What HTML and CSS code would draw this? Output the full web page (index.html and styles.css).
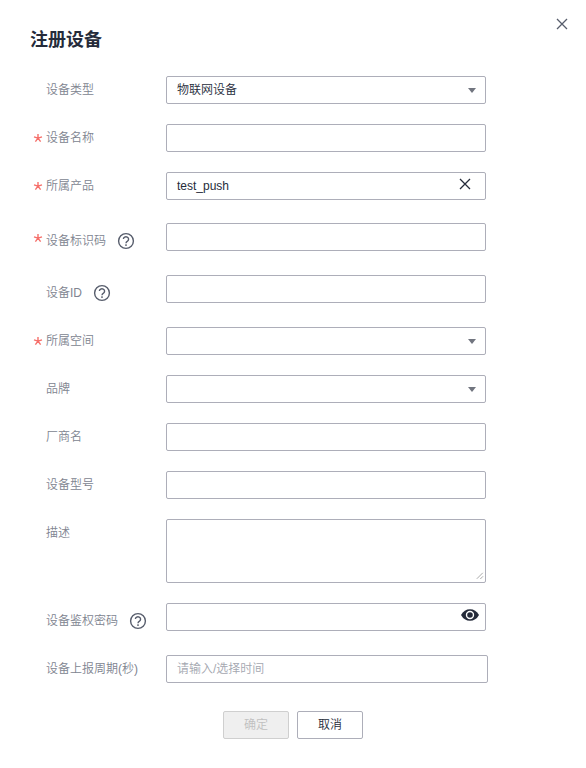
FILE: index.html
```html
<!DOCTYPE html>
<html lang="zh-CN">
<head>
<meta charset="utf-8">
<title>注册设备</title>
<link rel="stylesheet" href="styles.css">
</head>
<body>
<svg class="defs" aria-hidden="true">
  <symbol id="cross" viewBox="0 0 12 12"><path d="M1 1 11 11M11 1 1 11"/></symbol>
  <symbol id="help" viewBox="0 0 18 18"><circle cx="9" cy="9" r="7.4"/><path d="M6.400 7.100a2.600 2.400 0 1 1 4.100 2Q9 10 9 11.200"/><path d="M9 12.300v1.600"/></symbol>
  <symbol id="star" viewBox="0 0 10 10"><path d="M5 5.2V1M5 5.2 1 3.9M5 5.2 9 3.9M5 5.2 2.4 8.7M5 5.2 7.6 8.7"/></symbol>
</svg>
<main class="dialog">
  <button class="close" aria-label="关闭"><svg class="cross"><use href="#cross"/></svg></button>
  <h1 class="title">注册设备</h1>
  <form class="form">
    <div class="row">
      <label class="label"><span class="mark"></span>设备类型</label>
      <div class="control"><span>物联网设备</span><span class="caret"></span></div>
    </div>
    <div class="row">
      <label class="label"><span class="mark"><svg class="star"><use href="#star"/></svg></span>设备名称</label>
      <div class="control"></div>
    </div>
    <div class="row row-product">
      <label class="label"><span class="mark"><svg class="star"><use href="#star"/></svg></span>所属产品</label>
      <div class="control"><span>test_push</span><svg class="cross clear"><use href="#cross"/></svg></div>
    </div>
    <div class="row row-help">
      <label class="label"><span class="mark mark-high"><svg class="star"><use href="#star"/></svg></span>设备标识码<svg class="help"><use href="#help"/></svg></label>
      <div class="control"></div>
    </div>
    <div class="row row-help">
      <label class="label"><span class="mark"></span>设备ID<svg class="help"><use href="#help"/></svg></label>
      <div class="control"></div>
    </div>
    <div class="row">
      <label class="label"><span class="mark"><svg class="star"><use href="#star"/></svg></span>所属空间</label>
      <div class="control"><span class="caret"></span></div>
    </div>
    <div class="row">
      <label class="label"><span class="mark"></span>品牌</label>
      <div class="control"><span class="caret"></span></div>
    </div>
    <div class="row">
      <label class="label"><span class="mark"></span>厂商名</label>
      <div class="control"></div>
    </div>
    <div class="row">
      <label class="label"><span class="mark"></span>设备型号</label>
      <div class="control"></div>
    </div>
    <div class="row">
      <label class="label"><span class="mark"></span>描述</label>
      <div class="control control-area"><svg class="grip" viewBox="0 0 8 8"><path d="M.8 6.8 6.8.8M4.3 7 7 4.3"/></svg></div>
    </div>
    <div class="row row-help">
      <label class="label"><span class="mark"></span>设备鉴权密码<svg class="help"><use href="#help"/></svg></label>
      <div class="control"><svg class="eye" viewBox="0 0 18 12"><path class="lid" d="M0 6Q3.2.2 9 .2T18 6Q14.800 11.800 9 11.800T0 6Z"/><circle class="iris" cx="9" cy="6" r="3.500"/></svg></div>
    </div>
    <div class="row">
      <label class="label"><span class="mark"></span>设备上报周期(秒)</label>
      <div class="control control-wide"><span class="placeholder">请输入/选择时间</span></div>
    </div>
    <div class="actions">
      <button class="button" type="button" disabled>确定</button>
      <button class="button" type="button">取消</button>
    </div>
  </form>
</main>
</body>
</html>
```
FILE: styles.css
```css
* { box-sizing: border-box; }
body {
  margin: 0;
  background: #fff;
  color: #252b3a;
  font: 350 12px/18px "Liberation Sans", "Noto Sans CJK SC", sans-serif;
}
.defs { position: absolute; width: 0; height: 0; }
.dialog { position: relative; height: 768px; padding: 26px 30px 0; }
.title { margin: 0 0 22px; font-size: 18px; line-height: 28px; font-weight: 700; }
.close {
  position: absolute; top: 18px; right: 18px;
  display: flex; padding: 0; border: 0; background: none; color: #575d6c;
}
.cross { width: 12px; height: 12px; fill: none; stroke: currentColor; stroke-width: 1.3; }
.form { display: flex; flex-direction: column; gap: 20px; }
.row { display: grid; grid-template-columns: 136px 322px; align-items: start; min-height: 28px; }
.row-product { min-height: 31px; }
.row-help { min-height: 32px; }
.label { display: flex; align-items: center; height: 28px; color: #808490; }
.row-help .label { height: 36px; margin-bottom: -4px; }
.mark { display: flex; width: 16px; padding: 0 0 1px 3px; }
.mark-high { padding: 0 0 7px 3px; }
.star { width: 10px; height: 10px; fill: none; stroke: #f66f6a; stroke-width: 1.4; }
.help { width: 18px; height: 18px; margin-left: 11px; fill: none; stroke: #575d6c; stroke-width: 1.4; }
.control {
  display: flex; align-items: center; justify-content: space-between;
  width: 320px; height: 28px; padding: 0 9px 0 10px;
  border: 1px solid #adaeb9; border-radius: 2px; background: #fff;
}
.control-wide { width: 322px; }
.control-area { height: 64px; align-items: flex-end; justify-content: flex-end; padding: 0 1px 2px; }
.placeholder { color: #a4a7b0; }
.caret { margin-left: auto; border: 4px solid transparent; border-top: 5px solid #71757f; border-bottom: 0; }
.clear { margin: 0 5px 4px auto; color: #252b3a; }
.grip { width: 8px; height: 8px; fill: none; stroke: #aaa; stroke-width: 1; }
.eye { width: 18px; height: 12px; margin: 0 -3px 4px auto; }
.lid { fill: #252b3a; }
.iris { fill: #252b3a; stroke: #fff; stroke-width: 1.4; }
.actions { display: flex; gap: 8px; padding: 8px 0 0 193px; }
.button {
  width: 66px; height: 28px; padding: 0; border: 1px solid #adaeb9; border-radius: 2px;
  background: #fff; color: #252b3a; font: inherit;
}
.button:disabled { border-color: #cfcfcf; background: #efefef; color: #c0c0c0; }
```
